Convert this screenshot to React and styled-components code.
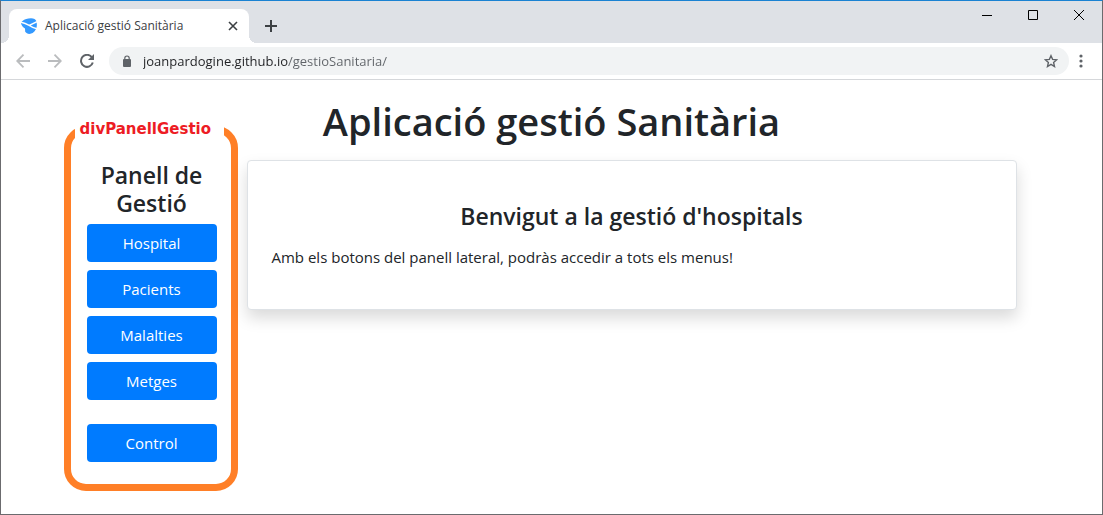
import React from "react";
import styled, { createGlobalStyle } from "styled-components";

const GlobalStyle = createGlobalStyle`
  *, *::before, *::after { box-sizing: border-box; }
  body {
    margin: 0;
    background: #fff;
    color: #212529;
    font-family: "Segoe UI", "Open Sans", "Noto Sans", sans-serif;
  }
  button, input { font-family: inherit; }
`;

const BrowserWindow = styled.div`
  display: flex;
  flex-direction: column;
  min-height: 100vh;
  border: 1px solid #6b6b6e;
  border-top-color: #1a82d2;
`;

const TabStrip = styled.div`
  display: flex;
  height: 42px;
  padding-left: 8px;
  background: #dee1e6;
`;

const Tab = styled.div`
  position: relative;
  display: flex;
  align-items: center;
  align-self: flex-end;
  width: 240px;
  height: 34px;
  padding: 0 8px 0 12px;
  border-radius: 8px 8px 0 0;
  background: #fff;

  &::before, &::after {
    content: "";
    position: absolute;
    bottom: 0;
    width: 8px;
    height: 8px;
  }
  &::before {
    right: 100%;
    background: radial-gradient(circle at 0 0, transparent 8px, #fff 8px);
  }
  &::after {
    left: 100%;
    background: radial-gradient(circle at 100% 0, transparent 8px, #fff 8px);
  }
`;

const TabTitle = styled.span`
  flex: 1;
  margin-left: 8px;
  color: #3c4043;
  font-size: 12px;
  line-height: 16px;
  white-space: nowrap;
`;

const IconButton = styled.button`
  display: flex;
  flex: none;
  align-items: center;
  justify-content: center;
  width: ${(p) => p.$width || 32}px;
  height: ${(p) => p.$height || 32}px;
  padding: 0;
  border: 0;
  background: none;
  color: ${(p) => p.$color || "#5f6368"};

  svg { display: block; }
`;

const NewTab = styled(IconButton)`
  margin: 9px 0 0 6px;
`;

const WindowControls = styled.div`
  display: flex;
  margin-left: auto;
`;

const Toolbar = styled.div`
  display: flex;
  align-items: center;
  height: 37px;
  padding: 0 10px 0 6px;
  border-bottom: 1px solid #d5d7da;
  background: #fff;
`;

const AddressBar = styled.label`
  display: flex;
  flex: 1;
  align-items: center;
  height: 28px;
  margin-left: 6px;
  padding: 0 2px 0 12px;
  border-radius: 14px;
  background: #f1f3f4;
`;

const AddressInput = styled.input`
  flex: 1;
  min-width: 0;
  height: 20px;
  margin-left: 10px;
  padding: 0;
  border: 0;
  outline: 0;
  background: linear-gradient(90deg, #202124 145px, #5f6368 145px);
  background-clip: text;
  color: #202124;
  -webkit-text-fill-color: transparent;
  font-size: 13px;
  line-height: 20px;
`;

const Page = styled.main`
  flex: 1;
  width: 100%;
  max-width: 976px;
  margin: 0 auto;
  padding: 18px 0 20px;
`;

const Title = styled.h1`
  margin: 0 0 2px;
  font-size: 38px;
  font-weight: 600;
  line-height: 46px;
  text-align: center;
`;

const Columns = styled.div`
  display: grid;
  grid-template-columns: 174px minmax(0, 1fr);
  column-gap: 9px;
  align-items: start;
  padding-right: 23px;
`;

const PanelFrame = styled.fieldset`
  min-width: 0;
  margin: -29px 0 0;
  padding: 20px 14px 22px 16px;
  border: 7px solid #ff7f27;
  border-radius: 22px;
`;

const PanelLabel = styled.legend`
  width: 149px;
  margin-left: -12px;
  padding: 0 5px;
  color: #ed1c24;
  font-family: "DejaVu Sans", sans-serif;
  font-size: 15px;
  font-weight: 700;
  line-height: 24px;
`;

const Heading = styled.h2`
  margin: 0 0 ${(p) => p.$gap}px;
  font-size: 23px;
  font-weight: 600;
  line-height: 28px;
  text-align: center;
`;

const Menu = styled.nav`
  display: flex;
  flex-direction: column;
  gap: 8px;
`;

const MenuButton = styled.button`
  height: 38px;
  margin-top: ${(p) => (p.$separate ? 16 : 0)}px;
  padding: 0 12px;
  border: 0;
  border-radius: 4px;
  background: #007bff;
  color: #fff;
  font-size: 15px;
  line-height: 24px;
`;

const Card = styled.section`
  margin-top: 14px;
  padding: 41px 24px 40px;
  border: 1px solid #dee2e6;
  border-radius: 4px;
  background: #fff;
  box-shadow: 0 8px 16px rgba(0, 0, 0, 0.15);
`;

const Paragraph = styled.p`
  margin: 0;
  font-size: 15px;
  line-height: 24px;
`;

const Favicon = () => (
  <svg width="16" height="16" viewBox="0 0 16 16" aria-hidden="true">
    <path
      d="M1.500 3C3.500 1 6.500.2 10 .2c2.800 0 4.800 1 5.400 3 .5 2 .6 4 .2 6-.8 3.200-3 5.800-6.100 6.600-2.300.4-4.300-.5-5.300-2L4 10.600C2 9.500.3 7 .1 5.500 0 4.600.7 3.700 1.500 3z"
      fill="#3399ff"
    />
    <path
      d="M0 4.200c3 .6 5.500 1.600 8.200 3.200L16 3.600M8.200 7.400c2 1.400 4.500 2.600 7.800 3.400"
      fill="none"
      stroke="#fff"
      strokeWidth="1.400"
    />
  </svg>
);

const menuItems = ["Hospital", "Pacients", "Malalties", "Metges"];

export default function App() {
  return (
    <>
      <GlobalStyle />
      <BrowserWindow>
        <TabStrip>
          <Tab>
            <Favicon />
            <TabTitle>Aplicació gestió Sanitària</TabTitle>
            <IconButton $width={16} $height={16} $color="#3c4043" aria-label="Tanca la pestanya">
              <svg width="10" height="10" viewBox="0 0 10 10" stroke="currentColor" strokeWidth="1.600">
                <path d="m1 1 8 8M9 1 1 9" />
              </svg>
            </IconButton>
          </Tab>
          <NewTab $color="#3c4043" aria-label="Pestanya nova">
            <svg width="12" height="12" viewBox="0 0 12 12" stroke="currentColor" strokeWidth="2">
              <path d="M6 0v12M0 6h12" />
            </svg>
          </NewTab>
          <WindowControls>
            <IconButton $width={46} $height={28} $color="#000" aria-label="Minimitza">
              <svg width="10" height="10" viewBox="0 0 10 10" stroke="currentColor">
                <path d="M0 5.500h10" />
              </svg>
            </IconButton>
            <IconButton $width={46} $height={28} $color="#000" aria-label="Maximitza">
              <svg width="10" height="10" viewBox="0 0 10 10" fill="none" stroke="currentColor">
                <path d="M.5.5h9v9h-9z" />
              </svg>
            </IconButton>
            <IconButton $width={46} $height={28} $color="#000" aria-label="Tanca">
              <svg width="10" height="10" viewBox="0 0 10 10" stroke="currentColor">
                <path d="m0 0 10 10M10 0 0 10" />
              </svg>
            </IconButton>
          </WindowControls>
        </TabStrip>

        <Toolbar>
          <IconButton $color="#babcbe" aria-label="Enrere">
            <svg width="14" height="14" viewBox="0 0 14 14" fill="none" stroke="currentColor" strokeWidth="1.800">
              <path d="M14 7H1.500M7.500.7 1.200 7l6.300 6.300" />
            </svg>
          </IconButton>
          <IconButton $color="#babcbe" aria-label="Endavant">
            <svg width="14" height="14" viewBox="0 0 14 14" fill="none" stroke="currentColor" strokeWidth="1.800">
              <path d="M0 7h12.500M6.500.7 12.800 7l-6.300 6.300" />
            </svg>
          </IconButton>
          <IconButton aria-label="Torna a carregar">
            <svg width="14" height="14" viewBox="0 0 14 14" fill="none" stroke="currentColor" strokeWidth="2">
              <path d="M11.800 3.200A6 6 0 1 0 12.800 8.500" />
              <path d="M14 0v6H8z" fill="currentColor" stroke="none" />
            </svg>
          </IconButton>
          <AddressBar>
            <svg width="12" height="12" viewBox="0 0 12 12" aria-hidden="true">
              <path d="M3.800 5V3.200a2.200 2.200 0 0 1 4.400 0V5" fill="none" stroke="#5f6368" strokeWidth="1.200" />
              <rect x="2" y="4" width="8" height="8" rx="1" fill="#5f6368" />
            </svg>
            <AddressInput
              type="text"
              aria-label="Adreça"
              defaultValue="joanpardogine.github.io/gestioSanitaria/"
              spellCheck={false}
            />
            <IconButton aria-label="Afegeix als preferits">
              <svg width="14" height="14" viewBox="0 0 14 14" fill="none" stroke="currentColor" strokeWidth="1.400">
                <path d="m7 1.700 1.600 3.700 4.100.4-3.100 2.700.9 4L7 10.400l-3.500 2.100.9-4-3.100-2.700 4.100-.4z" />
              </svg>
            </IconButton>
          </AddressBar>
          <IconButton $width={23} aria-label="Menú del navegador">
            <svg width="4" height="14" viewBox="0 0 4 14" fill="currentColor">
              <circle cx="2" cy="2" r="1.600" />
              <circle cx="2" cy="7" r="1.600" />
              <circle cx="2" cy="12" r="1.600" />
            </svg>
          </IconButton>
        </Toolbar>

        <Page>
          <Title>Aplicació gestió Sanitària</Title>
          <Columns>
            <PanelFrame>
              <PanelLabel>divPanellGestio</PanelLabel>
              <Heading $gap={7}>Panell de Gestió</Heading>
              <Menu>
                {menuItems.map((item) => (
                  <MenuButton key={item} type="button">{item}</MenuButton>
                ))}
                <MenuButton type="button" $separate>Control</MenuButton>
              </Menu>
            </PanelFrame>
            <Card>
              <Heading $gap={15}>Benvigut a la gestió d'hospitals</Heading>
              <Paragraph>Amb els botons del panell lateral, podràs accedir a tots els menus!</Paragraph>
            </Card>
          </Columns>
        </Page>
      </BrowserWindow>
    </>
  );
}
